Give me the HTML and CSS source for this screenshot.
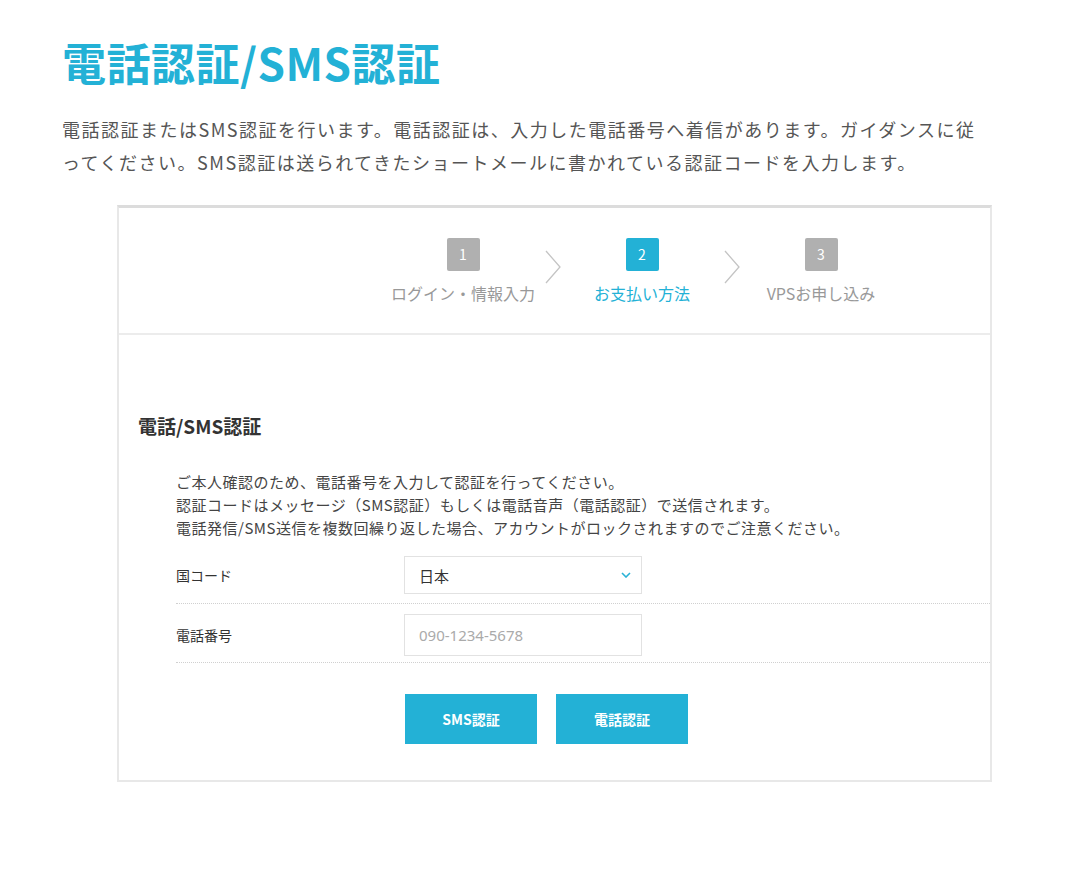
FILE: index.html
```html
<!DOCTYPE html>
<html lang="ja">
<head>
    <meta charset="UTF-8">
    <meta name="viewport" content="width=device-width, initial-scale=1.0">
    <title>電話認証/SMS認証</title>
    <link rel="stylesheet" href="styles.css">
</head>
<body>
    <div class="page">
        <h1 class="title">電話認証/SMS認証</h1>
        <p class="lead">電話認証またはSMS認証を行います。電話認証は、入力した電話番号へ着信があります。ガイダンスに従<br>ってください。SMS認証は送られてきたショートメールに書かれている認証コードを入力します。</p>

        <div class="card">
            <!-- ステップ -->
            <div class="stepper">
                <div class="step">
                    <span class="num">1</span>
                    <span class="label">ログイン・情報入力</span>
                </div>
                <div class="arrow">
                    <svg width="18" height="36" viewBox="0 0 18 36"><polyline points="2,2 16,18 2,34" fill="none" stroke="#c4c4c4" stroke-width="1.3"/></svg>
                </div>
                <div class="step active">
                    <span class="num">2</span>
                    <span class="label">お支払い方法</span>
                </div>
                <div class="arrow">
                    <svg width="18" height="36" viewBox="0 0 18 36"><polyline points="2,2 16,18 2,34" fill="none" stroke="#c4c4c4" stroke-width="1.3"/></svg>
                </div>
                <div class="step">
                    <span class="num">3</span>
                    <span class="label">VPSお申し込み</span>
                </div>
            </div>

            <!-- 認証フォーム -->
            <div class="auth">
                <h2 class="auth-title">電話/SMS認証</h2>
                <p class="auth-desc">ご本人確認のため、電話番号を入力して認証を行ってください。<br>認証コードはメッセージ（SMS認証）もしくは電話音声（電話認証）で送信されます。<br>電話発信/SMS送信を複数回繰り返した場合、アカウントがロックされますのでご注意ください。</p>

                <div class="form">
                    <div class="row">
                        <div class="row-label">国コード</div>
                        <div class="select">
                            <span>日本</span>
                            <svg width="10" height="6" viewBox="0 0 10 6"><polyline points="1,1 5,5 9,1" fill="none" stroke="#2ab2d6" stroke-width="1.6"/></svg>
                        </div>
                    </div>
                    <div class="row">
                        <div class="row-label">電話番号</div>
                        <input class="input" type="text" placeholder="090-1234-5678">
                    </div>
                </div>

                <div class="buttons">
                    <button class="btn">SMS認証</button>
                    <button class="btn">電話認証</button>
                </div>
            </div>
        </div>
    </div>
</body>
</html>
```

FILE: styles.css
```css
* {
    margin: 0;
    padding: 0;
    box-sizing: border-box;
}
body {
    background-color: #fff;
    font-family: "Noto Sans CJK JP", "Noto Sans", sans-serif;
    color: #444;
}
.page {
    padding: 34px 0 0 62px;
}
.title {
    font-size: 44px;
    line-height: 56px;
    font-weight: 700;
    color: #23b1d6;
    letter-spacing: 0.5px;
}
.lead {
    margin-top: 23px;
    font-size: 18px;
    line-height: 33px;
    letter-spacing: 1.5px;
    color: #555;
    white-space: nowrap;
}
/* カード */
.card {
    margin: 26px 0 0 55px;
    width: 875px;
    border: 2px solid #e8e8e8;
    border-top: 3px solid #dcdcdc;
}
.stepper {
    display: flex;
    height: 127px;
    padding: 30px 0 0 269px;
    border-bottom: 2px solid #ececec;
}
.step {
    width: 150px;
    display: flex;
    flex-direction: column;
    align-items: center;
}
.step .num {
    width: 33px;
    height: 33px;
    border-radius: 2px;
    background-color: #b0b0b0;
    color: #fff;
    font-size: 14px;
    line-height: 33px;
    text-align: center;
}
.step .label {
    margin-top: 10px;
    font-size: 16px;
    color: #999;
    white-space: nowrap;
}
.step.active .num {
    background-color: #23b1d6;
}
.step.active .label {
    color: #23b1d6;
}
.arrow {
    width: 29px;
    padding-top: 11px;
    display: flex;
    justify-content: center;
}
/* フォーム */
.auth {
    padding: 77px 0 36px 19px;
}
.auth-title {
    font-size: 19px;
    line-height: 28px;
    font-weight: 700;
    color: #333;
}
.auth-desc {
    margin: 30px 0 0 38px;
    font-size: 15px;
    line-height: 23px;
    letter-spacing: 0.5px;
    color: #444;
    white-space: nowrap;
}
.form {
    margin: 14px 0 0 38px;
}
.row {
    display: flex;
    align-items: center;
    padding: 3px 0 9px;
    border-bottom: 1px dotted #d0d0d0;
}
.row + .row {
    padding-top: 10px;
    padding-bottom: 6px;
}
.row-label {
    width: 228px;
    font-size: 14px;
    color: #333;
}
.select {
    width: 238px;
    height: 38px;
    border: 1px solid #e2e2e2;
    display: flex;
    align-items: center;
    justify-content: space-between;
    padding: 0 10px 0 14px;
    font-size: 15px;
    color: #333;
}
.input {
    width: 238px;
    height: 42px;
    border: 1px solid #e2e2e2;
    padding: 0 14px;
    font-family: "Noto Sans", "Noto Sans CJK JP", sans-serif;
    font-size: 15px;
    outline: none;
}
.input::placeholder {
    color: #aaa;
}
.buttons {
    display: flex;
    gap: 19px;
    margin: 31px 0 0 267px;
}
.btn {
    width: 132px;
    height: 50px;
    border: none;
    background-color: #23b1d6;
    color: #fff;
    font-family: "Noto Sans CJK JP", sans-serif;
    font-size: 14px;
    font-weight: 700;
    cursor: pointer;
}
```
